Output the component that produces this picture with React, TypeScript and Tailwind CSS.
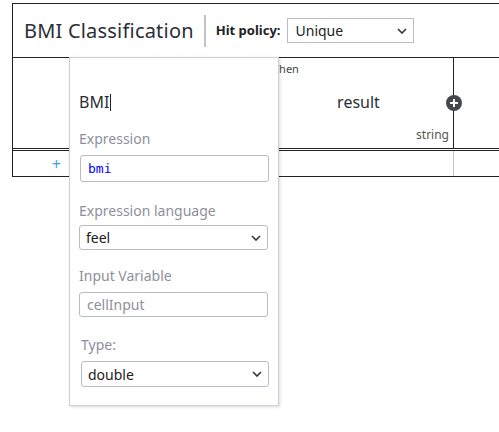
import React from "react";

const Chevron = () => (
  <svg width="10" height="6" viewBox="0 0 10 6" className="shrink-0">
    <path d="M1 1 L5 5 L9 1" fill="none" stroke="#333" strokeWidth="1.6" />
  </svg>
);

export default function App() {
  const font = { fontFamily: '"Noto Sans", "Open Sans", sans-serif' };
  return (
    <div className="w-[499px] h-[432px] overflow-hidden bg-white relative text-[#333]" style={font}>
      <div className="pt-[3px] pl-[12px]">
        <div className="w-[520px] border border-[#222] border-b-0">
          {/* header */}
          <div className="h-[53px] flex items-center pl-[11px]">
            <span className="text-[20px] leading-none text-[#2b2e36] tracking-[0.2px]">BMI Classification</span>
            <div className="ml-[10px] w-[2px] h-[32px] bg-[#c2c4cc]" />
            <span className="ml-[10px] text-[13px] font-bold text-[#222]">Hit policy:</span>
            <div className="ml-[6px] w-[127px] h-[25px] border border-[#b9bcc6] flex items-center justify-between pl-[8px] pr-[6px]">
              <span className="text-[14px] text-[#222]">Unique</span>
              <Chevron />
            </div>
          </div>
          {/* header row */}
          <div className="flex h-[91px] border-t border-[#222]">
            <div className="w-[57px] border-r border-[#222]" />
            <div className="w-[194px]" />
            <div className="w-[189px] relative">
              <span className="absolute left-[9px] top-[3px] text-[11px] text-[#444]">Then</span>
              <span className="absolute left-0 right-0 top-[32px] text-center text-[16px] text-[#2b2e36]">result</span>
              <span className="absolute right-[4px] top-[68px] text-[12px] text-[#555]">string</span>
            </div>
            <div className="w-[1px] bg-[#222] relative">
              <div className="absolute left-[-7.5px] top-[37px] w-[16px] h-[16px] rounded-full bg-[#45474f] flex items-center justify-center">
                <svg width="10" height="10" viewBox="0 0 10 10">
                  <path d="M5 1 V9 M1 5 H9" stroke="#fff" strokeWidth="2" />
                </svg>
              </div>
            </div>
            <div className="flex-1" />
          </div>
          {/* double line */}
          <div className="h-[3px] border-t border-b border-[#222]" />
          {/* body row */}
          <div className="flex h-[26px] border-b border-[#222]">
            <div className="w-[57px] border-r border-[#222] flex items-center justify-end pr-[8px]">
              <span className="text-[16px] leading-none text-[#3a9ff0]">+</span>
            </div>
            <div className="w-[383px]" />
            <div className="w-[1px] bg-[#c0c2ca]" />
            <div className="flex-1" />
          </div>
        </div>
      </div>

      {/* popup */}
      <div className="absolute left-[69px] top-[57px] w-[210px] h-[349px] bg-white border border-[#cfd0d6] shadow-[1px_1px_3px_rgba(0,0,0,0.15)] pl-[9px] pr-[10px]">
        <div className="mt-[34px] h-[20px] flex items-center text-[16px] text-[#2b2e36]">
          <span>BMI</span>
          <span className="inline-block w-[1px] h-[17px] bg-[#222] ml-[1px]" />
        </div>
        <div className="mt-[16px] h-[20px] flex items-center text-[14px] text-[#8d909a]">Expression</div>
        <div className="mt-[7px] h-[27px] w-[189px] ml-[1px] border border-[#b9bcc6] rounded-[3px] flex items-center pl-[7px]">
          <span className="text-[13px] text-[#0000ff]" style={{ fontFamily: '"DejaVu Sans Mono", monospace' }}>bmi</span>
        </div>
        <div className="mt-[18px] h-[20px] flex items-center text-[14px] text-[#8d909a]">Expression language</div>
        <div className="mt-[5px] h-[25px] w-[189px] border border-[#b9bcc6] rounded-[3px] flex items-center justify-between pl-[6px] pr-[6px]">
          <span className="text-[14px] text-[#222]">feel</span>
          <Chevron />
        </div>
        <div className="mt-[15px] h-[20px] flex items-center text-[14px] text-[#8d909a]">Input Variable</div>
        <div className="mt-[7px] h-[25px] w-[189px] border border-[#b9bcc6] rounded-[3px] flex items-center pl-[7px]">
          <span className="text-[14px] text-[#8d909a]">cellInput</span>
        </div>
        <div className="mt-[17px] h-[20px] flex items-center text-[14px] text-[#8d909a] pl-[2px]">Type:</div>
        <div className="mt-[7px] ml-[2px] h-[26px] w-[188px] border border-[#b9bcc6] rounded-[3px] flex items-center justify-between pl-[6px] pr-[6px]">
          <span className="text-[14px] text-[#222]">double</span>
          <Chevron />
        </div>
      </div>
    </div>
  );
}
